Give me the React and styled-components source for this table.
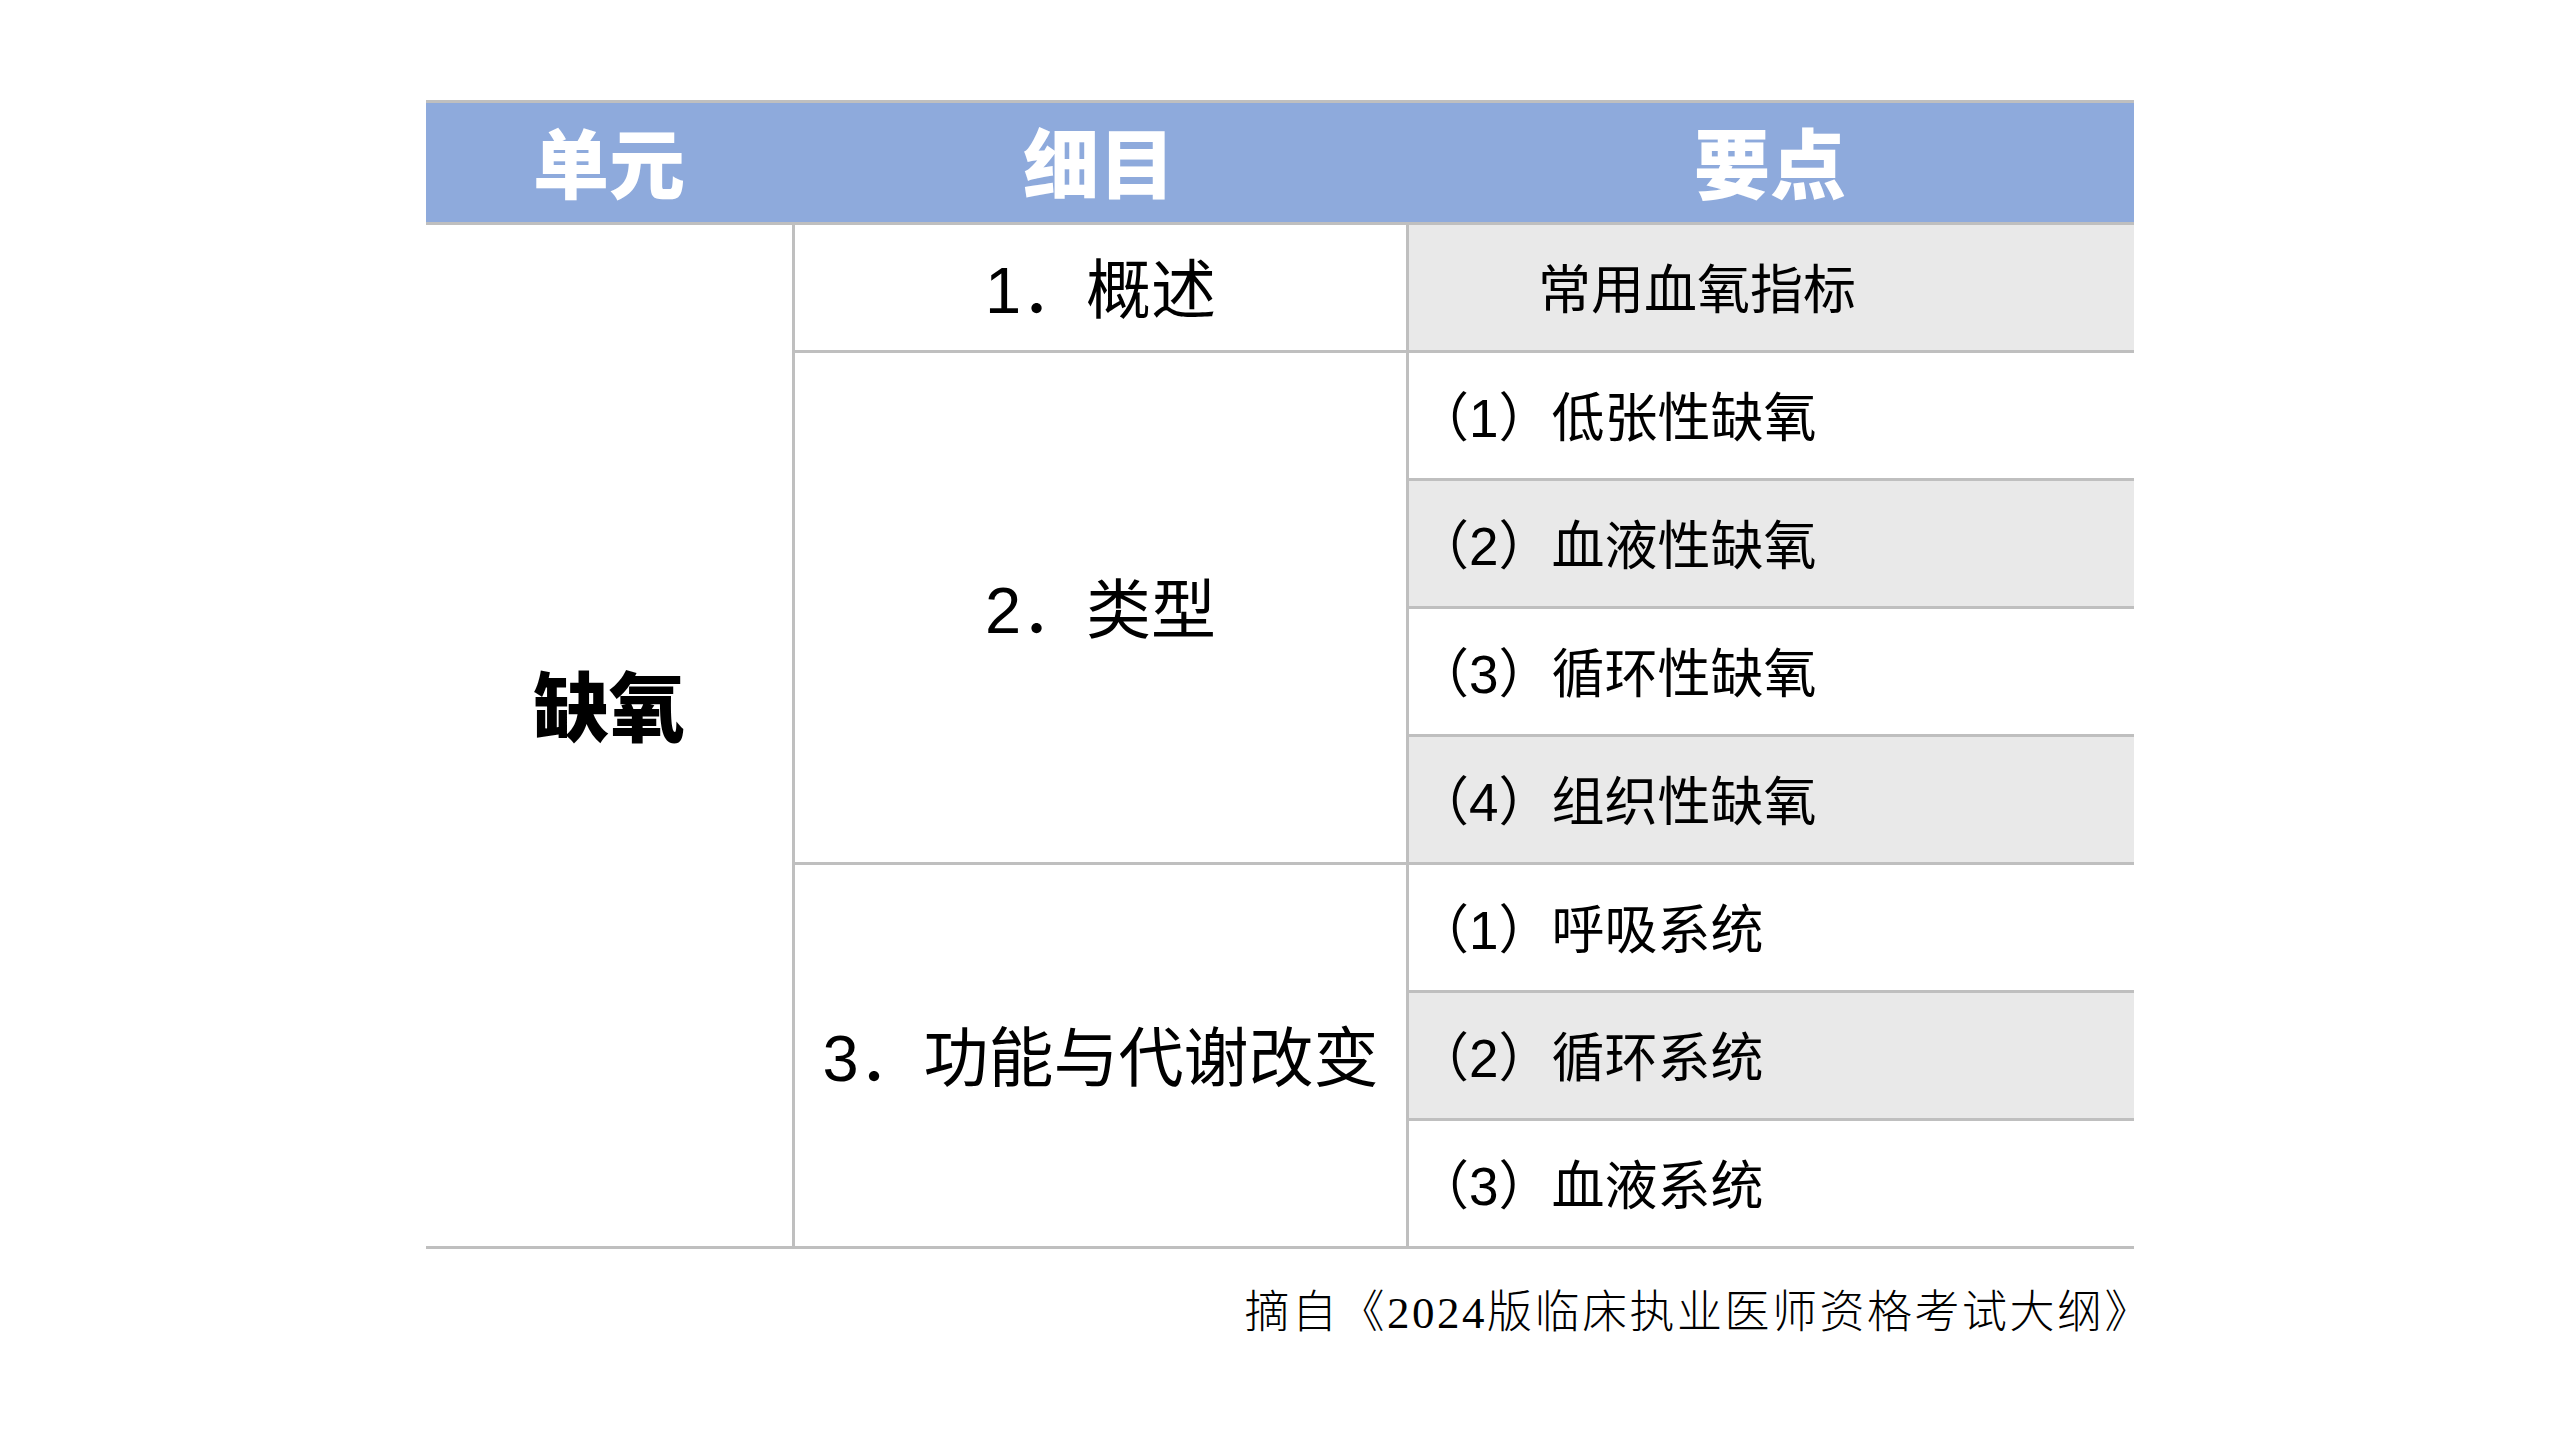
import React from "react";
import styled, { createGlobalStyle } from "styled-components";

const rows = [
  { topic: "1．概述", points: ["常用血氧指标"], indent: true },
  {
    topic: "2．类型",
    points: ["（1）低张性缺氧", "（2）血液性缺氧", "（3）循环性缺氧", "（4）组织性缺氧"],
  },
  {
    topic: "3．功能与代谢改变",
    points: ["（1）呼吸系统", "（2）循环系统", "（3）血液系统"],
  },
];

const GlobalStyle = createGlobalStyle`
  html, body {
    margin: 0;
    padding: 0;
    background: #ffffff;
  }
  body {
    width: 2560px;
    height: 1440px;
    overflow: hidden;
    font-family: "Liberation Sans", "Noto Sans CJK SC", sans-serif;
    color: #000;
  }
`;

const Page = styled.div`
  width: 2560px;
  height: 1440px;
  display: flex;
  flex-direction: column;
  align-items: center;
  padding-top: 100px;
  box-sizing: border-box;
`;

const Sheet = styled.div`
  width: 1708px;
  display: flex;
  flex-direction: column;
`;

const Header = styled.div`
  display: grid;
  grid-template-columns: 366px 614px 728px;
  height: 125px;
  box-sizing: border-box;
  background: #8eaadc;
  border-top: 3px solid #bfbfbf;
  border-bottom: 3px solid #bfbfbf;
`;

const HeadCell = styled.div`
  display: flex;
  align-items: center;
  justify-content: center;
  color: #ffffff;
  font-family: "Noto Sans CJK SC", sans-serif;
  font-weight: 900;
  font-size: 76px;
  line-height: 1;
  padding-bottom: 6px;
`;

const Body = styled.div`
  display: grid;
  grid-template-columns: 366px 614px 728px;
  grid-template-rows: repeat(8, 128px);
`;

const UnitCell = styled.div`
  grid-column: 1;
  grid-row: 1 / span 8;
  display: flex;
  align-items: center;
  justify-content: center;
  padding-bottom: 66px;
  box-sizing: border-box;
  border-bottom: 3px solid #bfbfbf;
  font-family: "Noto Sans CJK SC", sans-serif;
  font-weight: 900;
  font-size: 76px;
  line-height: 1;
`;

const TopicCell = styled.div`
  grid-column: 2;
  grid-row: ${(p) => p.$start} / span ${(p) => p.$span};
  display: flex;
  align-items: center;
  justify-content: center;
  box-sizing: border-box;
  padding-top: 5px;
  border-left: 3px solid #bfbfbf;
  border-bottom: 3px solid #bfbfbf;
  font-size: 65px;
  line-height: 1;
  white-space: nowrap;
`;

const PointCell = styled.div`
  grid-column: 3;
  display: flex;
  align-items: center;
  box-sizing: border-box;
  padding-top: 5px;
  padding-left: ${(p) => (p.$indent ? "129px" : "7px")};
  background: ${(p) => (p.$shade ? "#e9e9e9" : "#ffffff")};
  border-left: 3px solid #bfbfbf;
  border-bottom: 3px solid #bfbfbf;
  font-size: 53px;
  line-height: 1;
  white-space: nowrap;
`;

const Source = styled.div`
  align-self: flex-end;
  margin-top: 42px;
  margin-right: -18px;
  font-family: "Liberation Serif", "Noto Sans CJK SC", serif;
  font-weight: 300;
  font-size: 45px;
  letter-spacing: 2.5px;
  line-height: 1;
  color: #000;
  white-space: nowrap;
`;

export default function App() {
  let line = 1;
  let shadeIndex = 0;
  return (
    <Page>
      <GlobalStyle />
      <Sheet>
        <Header>
          <HeadCell>单元</HeadCell>
          <HeadCell>细目</HeadCell>
          <HeadCell>要点</HeadCell>
        </Header>
        <Body>
          <UnitCell>缺氧</UnitCell>
          {rows.map((row) => {
            const start = line;
            line += row.points.length;
            return (
              <React.Fragment key={row.topic}>
                <TopicCell $start={start} $span={row.points.length}>
                  {row.topic}
                </TopicCell>
                {row.points.map((point) => {
                  const shade = shadeIndex % 2 === 0;
                  shadeIndex += 1;
                  return (
                    <PointCell key={point} $shade={shade} $indent={row.indent}>
                      {point}
                    </PointCell>
                  );
                })}
              </React.Fragment>
            );
          })}
        </Body>
        <Source>摘自《2024版临床执业医师资格考试大纲》</Source>
      </Sheet>
    </Page>
  );
}
